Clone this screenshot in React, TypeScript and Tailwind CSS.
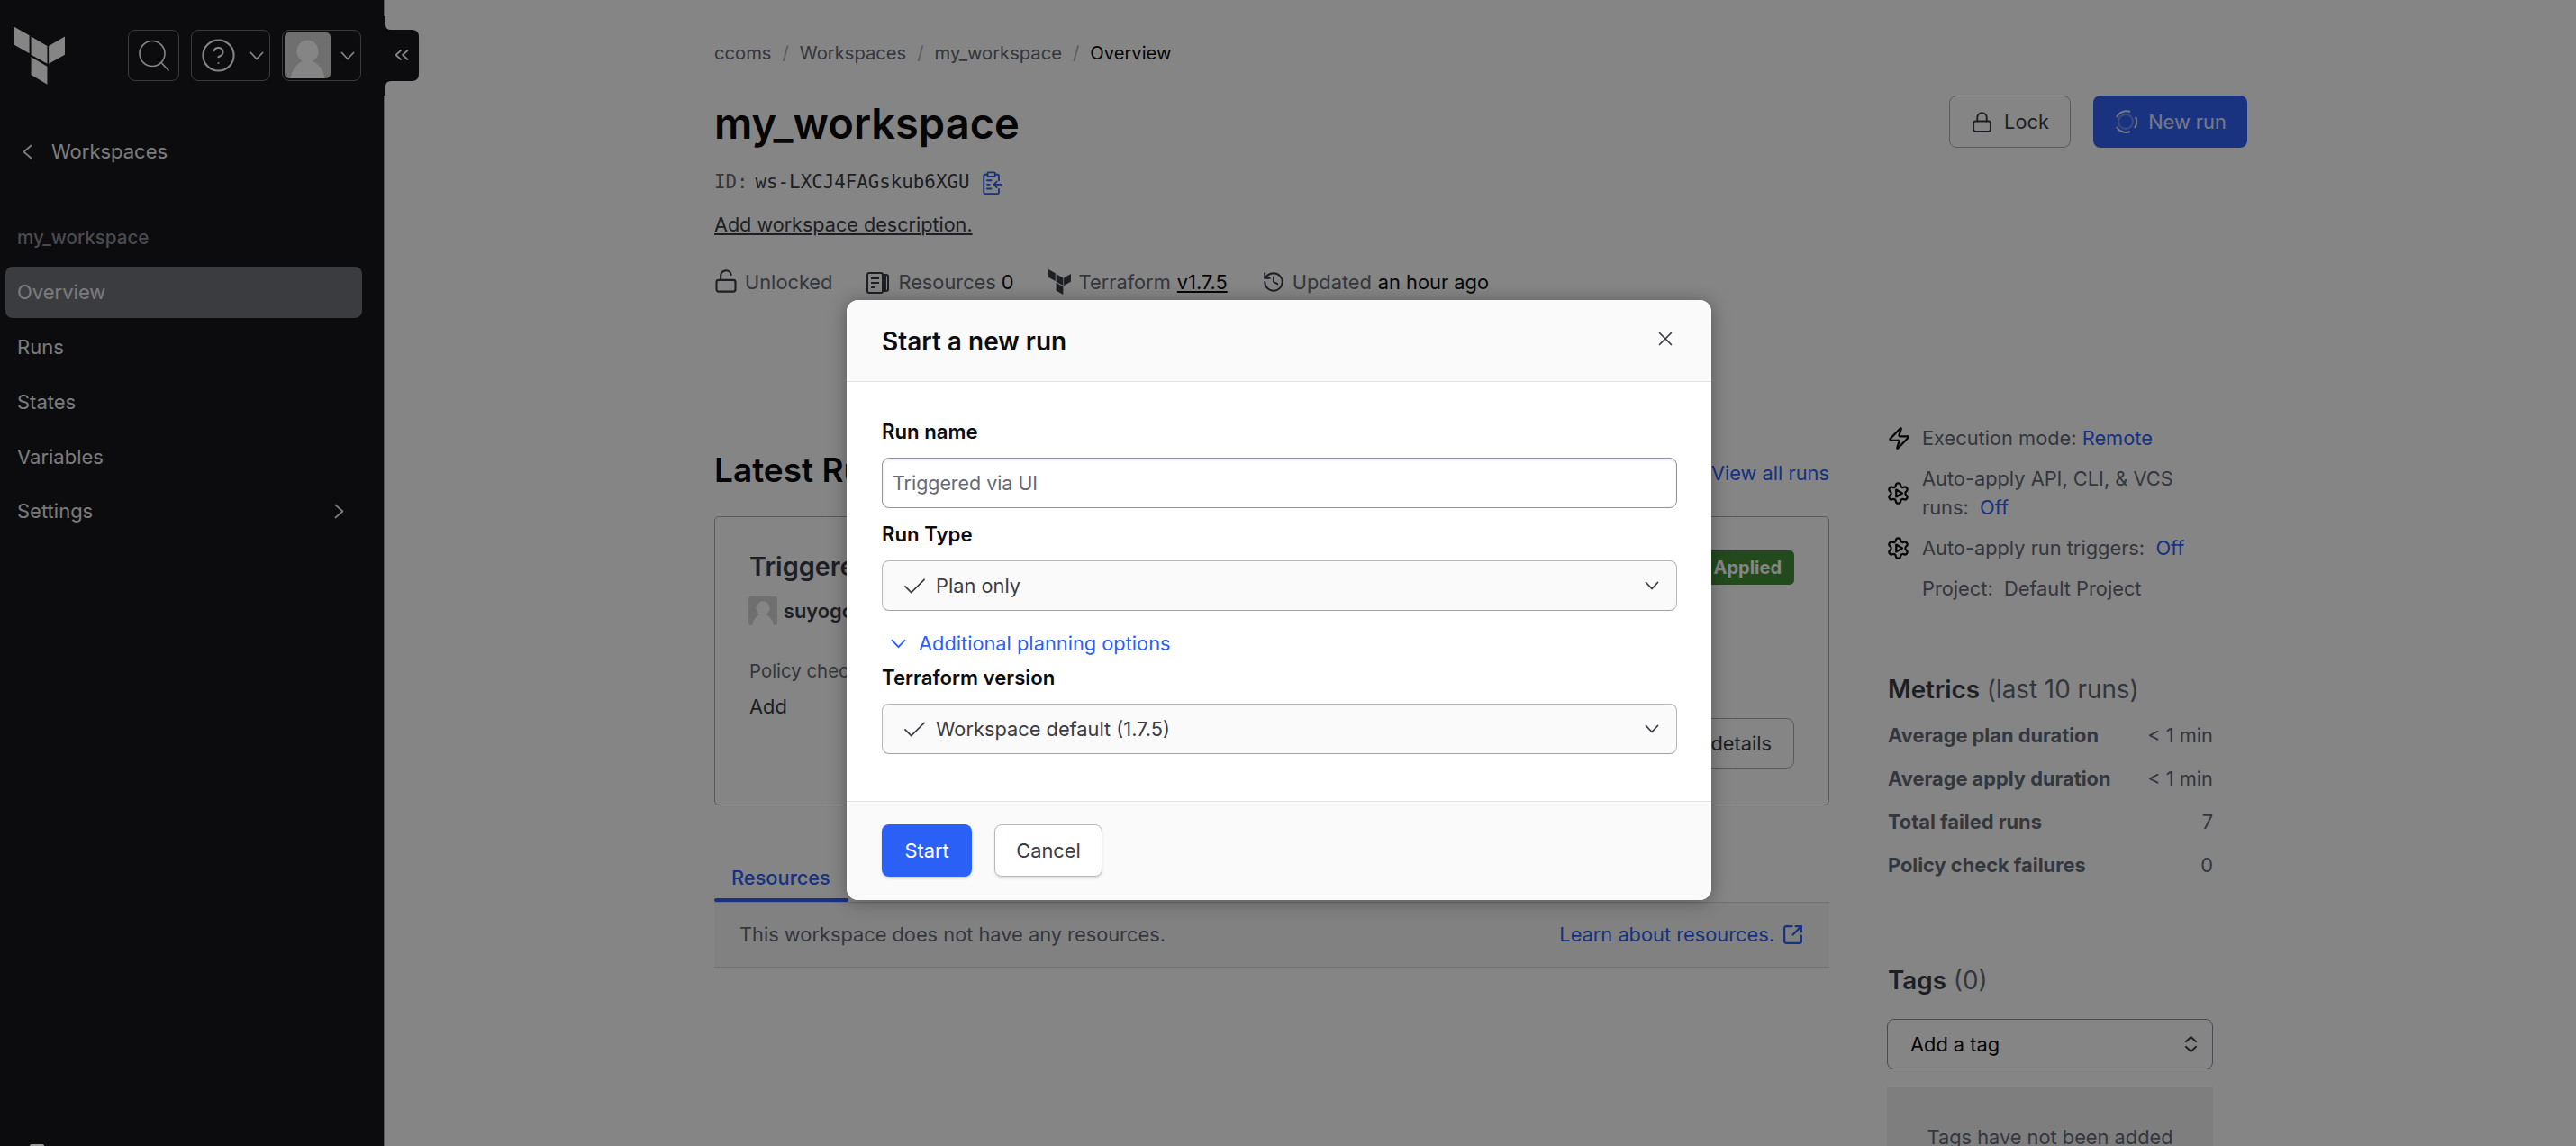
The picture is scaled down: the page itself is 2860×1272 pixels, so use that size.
import React from "react";
import { History, Lock, LockOpen, Zap, SquareArrowOutUpRight, CircleHelp, X } from "lucide-react";

function Logo({ className }: { className: string }) {
  return (
    <svg viewBox="45 88 172 194" className={className} fill="currentColor">
      <polygon points="45,88 98,118 98,178 45,148" />
      <polygon points="104,122 158,153 158,213 104,183" />
      <polygon points="163,153 217,122 217,183 163,213" />
      <polygon points="104,190 158,222 158,282 104,250" />
    </svg>
  );
}

function Chev({ className }: { className: string }) {
  return (
    <svg viewBox="0 0 16 10" className={className} fill="none" stroke="currentColor" strokeWidth="1.8" strokeLinecap="round" strokeLinejoin="round">
      <polyline points="1.5,1.5 8,8.5 14.5,1.5" />
    </svg>
  );
}

function ChevSide({ dir, className }: { dir: "l" | "r"; className: string }) {
  return (
    <svg viewBox="0 0 11 17" className={className} fill="none" stroke="currentColor" strokeWidth="1.8" strokeLinecap="round" strokeLinejoin="round">
      <polyline points={dir === "l" ? "9.5,1.5 1.5,8.5 9.5,15.5" : "1.5,1.5 9.5,8.5 1.5,15.5"} />
    </svg>
  );
}

function Check() {
  return (
    <svg viewBox="0 0 24 17" className="w-[23px] h-[17px] shrink-0 text-[#3b3d45]" fill="none" stroke="currentColor" strokeWidth="1.8" strokeLinecap="round" strokeLinejoin="round">
      <polyline points="1,9 8,16 23,1" />
    </svg>
  );
}

function Avatar({ className }: { className: string }) {
  return (
    <div className={`relative overflow-hidden bg-[#d5d5d5] ${className}`}>
      <svg viewBox="0 0 51 51" className="w-full h-full" fill="#ffffff">
        <ellipse cx="25.5" cy="21" rx="12" ry="12.5" />
        <ellipse cx="25.5" cy="54" rx="19" ry="23" />
      </svg>
    </div>
  );
}

function GearPlay() {
  return (
    <svg viewBox="0 0 24 24" className="w-[27px] h-[27px] shrink-0 text-[#0c0c0e]" fill="none" stroke="currentColor" strokeWidth="2" strokeLinejoin="round">
      <path d="M9.671 4.136a2.34 2.34 0 0 1 4.659 0 2.34 2.34 0 0 0 3.319 1.915 2.34 2.34 0 0 1 2.33 4.033 2.34 2.34 0 0 0 0 3.831 2.34 2.34 0 0 1-2.33 4.033 2.34 2.34 0 0 0-3.319 1.915 2.34 2.34 0 0 1-4.659 0 2.34 2.34 0 0 0-3.32-1.915 2.34 2.34 0 0 1-2.33-4.033 2.34 2.34 0 0 0 0-3.831A2.34 2.34 0 0 1 6.35 6.051a2.34 2.34 0 0 0 3.319-1.915" />
      <polygon points="10,8.5 16,12 10,15.5" />
    </svg>
  );
}

function Sidebar() {
  return (
    <aside className="w-[428px] h-full shrink-0 bg-[#17171b] border-r-2 border-[#a8a8a8] text-[#ebebeb] text-[22px] leading-[32px]">
      <div className="flex items-start h-[152px] pt-[29px] pl-[15px]">
        <Logo className="w-[57px] h-[65px] text-white" />
        <div className="flex items-center gap-[13px] ml-[70px] mt-[4px]">
          <div className="w-[57px] h-[57px] rounded-[8px] border border-[#6f7076] flex items-center justify-center text-white">
            <svg viewBox="0 0 36 36" className="w-[36px] h-[36px]" fill="none" stroke="currentColor" strokeWidth="1.6" strokeLinecap="round">
              <circle cx="16" cy="15.5" r="14" />
              <line x1="26" y1="25.5" x2="34" y2="34" />
            </svg>
          </div>
          <div className="w-[88px] h-[57px] rounded-[8px] border border-[#6f7076] flex items-center pl-[9px] text-white">
            <CircleHelp size={41} strokeWidth={1.2} />
            <Chev className="w-[16px] h-[10px] ml-[14px]" />
          </div>
          <div className="w-[88px] h-[57px] rounded-[8px] border border-[#6f7076] flex items-center pl-[2px] text-white">
            <Avatar className="w-[51px] h-[51px] rounded-[5px]" />
            <Chev className="w-[16px] h-[10px] ml-[11px]" />
          </div>
        </div>
      </div>
      <div className="flex items-center h-[32px] pl-[25px]">
        <ChevSide dir="l" className="w-[11px] h-[17px]" />
        <span className="ml-[21px]">Workspaces</span>
      </div>
      <div className="mt-[64px] pl-[19px] text-[#8e8f99] font-medium text-[20.6px]">my_workspace</div>
      <nav className="mt-[16px] ml-[6px] mr-[24px] flex flex-col">
        <div className="h-[57px] flex items-center pl-[13px] pb-[2px] rounded-[8px] bg-[#72747b]">Overview</div>
        <div className="h-[32px] flex items-center pl-[13px] mt-[16px]">Runs</div>
        <div className="h-[32px] flex items-center pl-[13px] mt-[29px]">States</div>
        <div className="h-[32px] flex items-center pl-[13px] mt-[29px]">Variables</div>
        <div className="h-[32px] flex items-center justify-between pl-[13px] mt-[28px]">
          <span>Settings</span>
          <ChevSide dir="r" className="w-[11px] h-[17px] mr-[20px]" />
        </div>
      </nav>
    </aside>
  );
}

function Meta() {
  return (
    <div className="mt-[32px] flex items-center h-[32px] text-[#656a76] text-[21.8px]">
      <LockOpen size={28} strokeWidth={1.8} className="text-[#3b3d45] -mt-[3px] -ml-[1px]" />
      <span className="ml-[7px]">Unlocked</span>
      <svg viewBox="0 0 27 27" className="w-[27px] h-[27px] ml-[38px] text-[#3b3d45]" fill="none" stroke="currentColor" strokeWidth="2" strokeLinejoin="round">
        <rect x="1" y="3" width="17" height="22" rx="2" />
        <path d="M18 5h4a2 2 0 0 1 2 2v14a2 2 0 0 1-2 2h-4M5 9h9M5 14h9M5 19h5M21 5v18" />
      </svg>
      <span className="ml-[8px]">Resources</span>
      <span className="ml-[6px] text-[#0c0c0e]">0</span>
      <Logo className="w-[25px] h-[28px] ml-[38px] text-[#3b3d45]" />
      <span className="ml-[9px]">Terraform</span>
      <span className="ml-[7px] underline text-[#0c0c0e]">v1.7.5</span>
      <History size={26} strokeWidth={1.8} className="ml-[38px] text-[#3b3d45]" />
      <span className="ml-[8px]">Updated</span>
      <span className="ml-[7px] text-[#0c0c0e]">an hour ago</span>
    </div>
  );
}

function LeftColumn() {
  return (
    <div className="w-[1238px] pt-[30px] shrink-0">
      <div className="flex items-center justify-between h-[44px]">
        <h2 className="text-[37px] leading-[44px] font-semibold text-[#0c0c0e]">Latest Runs</h2>
        <a className="text-[#2b60f6] text-[21.8px] mt-[6px]">View all runs</a>
      </div>
      <div className="mt-[29px] h-[321px] border-[1.6px] border-[#adadad] rounded-[5px] pl-[38px] pr-[38px] pt-[35px] flex justify-between">
        <div>
          <div className="text-[28.8px] leading-[40px] font-semibold text-[#3b3d45]">Triggered via UI</div>
          <div className="flex items-center mt-[13px] -ml-[1px]">
            <Avatar className="w-[32px] h-[32px] rounded-[3px]" />
            <span className="ml-[7px] text-[21.8px] font-semibold text-[#3b3d45]">suyogch triggered</span>
          </div>
          <div className="mt-[34px] text-[20.4px] leading-[32px] text-[#656a76]">Policy checks</div>
          <div className="mt-[7px] text-[21.8px] leading-[32px] text-[#3b3d45]">Add</div>
        </div>
        <div className="flex flex-col items-end">
          <div className="h-[38px] px-[14px] mt-[2px] rounded-[5px] bg-[#438f38] text-white text-[20px] font-bold flex items-center">Applied</div>
          <div className="mt-[148px] h-[56px] px-[24px] rounded-[8px] border-[1.6px] border-[#adadad] flex items-center text-[21.8px] text-[#3b3d45]">See details</div>
        </div>
      </div>
      <div className="mt-[56px] h-[51px] relative">
        <div className="absolute left-0 bottom-0 w-[149px] h-[4px] bg-[#2b60f6] rounded-[2px]" />
        <div className="pl-[19px] pt-[8px] text-[21.8px] leading-[32px] text-[#2b60f6] font-medium">Resources</div>
      </div>
      <div className="h-[73px] bg-[#f8f8f9] border-b-[1.6px] border-t-[1.6px] border-[#d8d8d8] flex items-center justify-between pl-[28px] pr-[28px] text-[21.8px] text-[#656a76]">
        <span>This workspace does not have any resources.</span>
        <span className="flex items-center gap-[8px] text-[#2b60f6]">
          Learn about resources.
          <SquareArrowOutUpRight size={25} strokeWidth={2.1} />
        </span>
      </div>
    </div>
  );
}

function MetricRow({ label, value }: { label: string; value: string }) {
  return (
    <div className="flex justify-between h-[32px] items-center">
      <span className="font-bold text-[#656a76]">{label}</span>
      <span className="text-[#656a76]">{value}</span>
    </div>
  );
}

function RightColumn() {
  return (
    <div className="w-[362px] ml-[64px] shrink-0 text-[21.8px] leading-[32px] text-[#656a76]">
      <div className="flex items-center h-[32px] pl-[5px]">
        <Zap size={27} strokeWidth={2} className="text-[#0c0c0e] -ml-[5px]" />
        <span className="ml-[12px]">Execution mode: <span className="text-[#2b60f6]">Remote</span></span>
      </div>
      <div className="flex items-center mt-[13px] pl-[5px]">
        <div className="-ml-[6px]"><GearPlay /></div>
        <div className="ml-[13px]">Auto-apply API, CLI, &amp; VCS<br />runs:&nbsp; <span className="text-[#2b60f6]">Off</span></div>
      </div>
      <div className="flex items-center mt-[13px] pl-[5px]">
        <div className="-ml-[6px]"><GearPlay /></div>
        <div className="ml-[13px]">Auto-apply run triggers:&nbsp; <span className="text-[#2b60f6]">Off</span></div>
      </div>
      <div className="mt-[13px] pl-[39px]">Project:&nbsp; Default Project</div>
      <div className="mt-[76px] text-[27.8px] leading-[40px] pl-[1px]">
        <span className="font-semibold text-[#3b3d45]">Metrics</span> <span>(last 10 runs)</span>
      </div>
      <div className="mt-[15px] flex flex-col gap-[16px] pl-[1px]">
        <MetricRow label="Average plan duration" value="< 1 min" />
        <MetricRow label="Average apply duration" value="< 1 min" />
        <MetricRow label="Total failed runs" value="7" />
        <MetricRow label="Policy check failures" value="0" />
      </div>
      <div className="mt-[92px] text-[27.8px] leading-[40px] pl-[1px]">
        <span className="font-semibold text-[#3b3d45]">Tags</span> <span>(0)</span>
      </div>
      <div className="mt-[23px] h-[56px] rounded-[8px] border-[1.6px] border-[#8a8e98] flex items-center justify-between pl-[25px] pr-[16px] text-[#0c0c0e]">
        <span>Add a tag</span>
        <svg viewBox="0 0 16 20" className="w-[15px] h-[20px] text-[#3b3d45]" fill="none" stroke="currentColor" strokeWidth="2" strokeLinecap="round" strokeLinejoin="round">
          <polyline points="2,7 8,1.5 14,7" />
          <polyline points="2,13 8,18.5 14,13" />
        </svg>
      </div>
      <div className="mt-[20px] h-[200px] bg-[#f1f2f3] pt-[39px] text-center">Tags have not been added</div>
    </div>
  );
}

function Main() {
  return (
    <main className="flex-1 pl-[365px] pt-[43px] text-[#3b3d45]">
      <div className="flex items-center h-[32px] text-[20.2px] text-[#656a76]">
        <span>ccoms</span>
        <span className="mx-[12px] text-[#b0b0b0]">/</span>
        <span>Workspaces</span>
        <span className="mx-[12px] text-[#b0b0b0]">/</span>
        <span>my_workspace</span>
        <span className="mx-[12px] text-[#b0b0b0]">/</span>
        <span className="text-[#0c0c0e]">Overview</span>
      </div>
      <div className="mt-[31px] w-[1702px] flex justify-between items-start">
        <div>
          <h1 className="mt-[3px] text-[47px] leading-[56px] font-semibold text-[#0c0c0e]">my_workspace</h1>
          <div className="mt-[22px] flex items-center h-[32px] text-[20.8px] font-['DejaVu_Sans_Mono',monospace] text-[#656a76]">
            <span>ID:</span>
            <span className="ml-[8px] text-[#3b3d45]">ws-LXCJ4FAGskub6XGU</span>
            <svg viewBox="0 0 24 28" className="ml-[14px] w-[24px] h-[26px] text-[#2b60f6]" fill="none" stroke="currentColor" strokeWidth="2" strokeLinecap="round" strokeLinejoin="round">
              <path d="M6 4H3a1.5 1.5 0 0 0-1.5 1.5v20A1.5 1.5 0 0 0 3 27h15a1.5 1.5 0 0 0 1.5-1.5v-4M19.500 11V5.500A1.500 1.500 0 0 0 18 4h-3" />
              <rect x="6" y="1.500" width="9" height="5" rx="1" />
              <path d="M5.500 11h5M5.500 16h3M5.500 21h5M23 16h-9M17 12.500 13.500 16l3.500 3.500" />
            </svg>
          </div>
          <div className="mt-[14px] h-[32px] leading-[32px] text-[21.6px] underline text-[#3b3d45]">Add workspace description.</div>
          <Meta />
        </div>
        <div className="flex gap-[25px]">
          <div className="h-[58px] w-[135px] rounded-[8px] border-[1.6px] border-[#adadad] flex items-center justify-center gap-[12px] text-[21.8px] text-[#3b3d45]">
            <Lock size={25} strokeWidth={1.8} />
            Lock
          </div>
          <div className="h-[58px] w-[171px] rounded-[8px] bg-[#3363f5] flex items-center justify-center gap-[12px] text-[21.8px] text-white/85">
            <svg viewBox="0 0 26 26" className="w-[26px] h-[26px]" fill="none" strokeWidth="2">
              <circle cx="13" cy="13" r="8" stroke="#6f92f8" />
              <path d="M3 8A12 12 0 0 1 18 2M24 8a12 12 0 0 1-1 12M18 24A12 12 0 0 1 3 19" stroke="#ffffff" strokeOpacity="0.85" />
            </svg>
            New run
          </div>
        </div>
      </div>
      <div className="mt-[141px] flex">
        <LeftColumn />
        <RightColumn />
      </div>
    </main>
  );
}

function Field({ label, children, className = "" }: { label: string; children: React.ReactNode; className?: string }) {
  return (
    <div className={className}>
      <div className="h-[32px] leading-[32px] text-[22.2px] font-semibold text-[#0c0c0e]">{label}</div>
      {children}
    </div>
  );
}

function SelectBox({ text }: { text: string }) {
  return (
    <div className="mt-[13px] h-[56px] rounded-[8px] border-[1.6px] border-[#b6b8be] border-b-[#a0a2aa] bg-[#fafafa] flex items-center pl-[24px] pr-[19px] text-[#3b3d45] text-[21.8px]">
      <Check />
      <span className="ml-[12px]">{text}</span>
      <Chev className="ml-auto w-[16px] h-[10px]" />
    </div>
  );
}

function Modal() {
  return (
    <div className="absolute inset-0 bg-black/48">
      <div className="absolute left-[940px] top-[333px] w-[960px] h-[666px] bg-white rounded-[13px] overflow-hidden shadow-[0_2px_20px_rgba(0,0,0,0.35)] flex flex-col">
        <div className="h-[91px] shrink-0 bg-[#fafafa] border-b-[1.6px] border-[#e4e4e6] flex items-center justify-between pl-[39px] pr-[38px]">
          <span className="text-[28px] leading-[40px] font-semibold text-[#0c0c0e] mt-[1px]">Start a new run</span>
          <X size={26} strokeWidth={1.6} className="text-[#3b3d45] -mt-[5px]" />
        </div>
        <div className="flex-1 pl-[39px] pr-[38px] pt-[39px]">
          <Field label="Run name">
            <div className="mt-[13px] h-[56px] rounded-[8px] border-[1.6px] border-[#8f92a0] shadow-[inset_0_2px_3px_rgba(0,0,0,0.08)] flex items-center pl-[11px] text-[21.4px] text-[#656a76]">Triggered via UI</div>
          </Field>
          <Field label="Run Type" className="mt-[13px]">
            <SelectBox text="Plan only" />
          </Field>
          <div className="mt-[20px] h-[32px] flex items-center pl-[10px] text-[21.8px] text-[#2b60f6]">
            <Chev className="w-[17px] h-[11px]" />
            <span className="ml-[14px]">Additional planning options</span>
          </div>
          <Field label="Terraform version" className="mt-[6px]">
            <SelectBox text="Workspace default (1.7.5)" />
          </Field>
        </div>
        <div className="h-[110px] shrink-0 bg-[#fafafa] border-t-[1.6px] border-[#e4e4e6] flex items-start gap-[25px] pl-[39px] pt-[25px] text-[21.8px]">
          <div className="w-[100px] h-[58px] rounded-[8px] bg-[#2b60f6] text-white flex items-center justify-center shadow-[0_2px_3px_rgba(0,0,0,0.15)]">Start</div>
          <div className="w-[120px] h-[58px] rounded-[8px] border-[1.6px] border-[#b6b8be] bg-white text-[#3b3d45] flex items-center justify-center shadow-[0_2px_3px_rgba(0,0,0,0.1)]">Cancel</div>
        </div>
      </div>
    </div>
  );
}

export default function App() {
  return (
    <div className="relative w-[2860px] h-[1272px] overflow-hidden bg-white flex font-['Inter',sans-serif]">
      <Sidebar />
      <svg viewBox="0 0 39 88" className="absolute left-[426px] top-[18px] w-[39px] h-[88px] text-[#17171b]" fill="currentColor">
        <path d="M0 0H2V9Q2 15 8 15H31Q39 15 39 23V64Q39 72 31 72H8Q2 72 2 78V88H0Z" />
      </svg>
      <svg viewBox="0 0 16 12" className="absolute left-[438px] top-[55px] w-[16px] h-[12px] text-white" fill="none" stroke="currentColor" strokeWidth="1.8" strokeLinecap="round" strokeLinejoin="round">
        <polyline points="7,1 1.500,6 7,11" />
        <polyline points="14.500,1 9,6 14.500,11" />
      </svg>
      <Main />
      <Modal />
      <div className="absolute left-[33px] bottom-0 w-[16px] h-[2px] rounded-t-[2px] bg-[#9a9a9a]" />
    </div>
  );
}
